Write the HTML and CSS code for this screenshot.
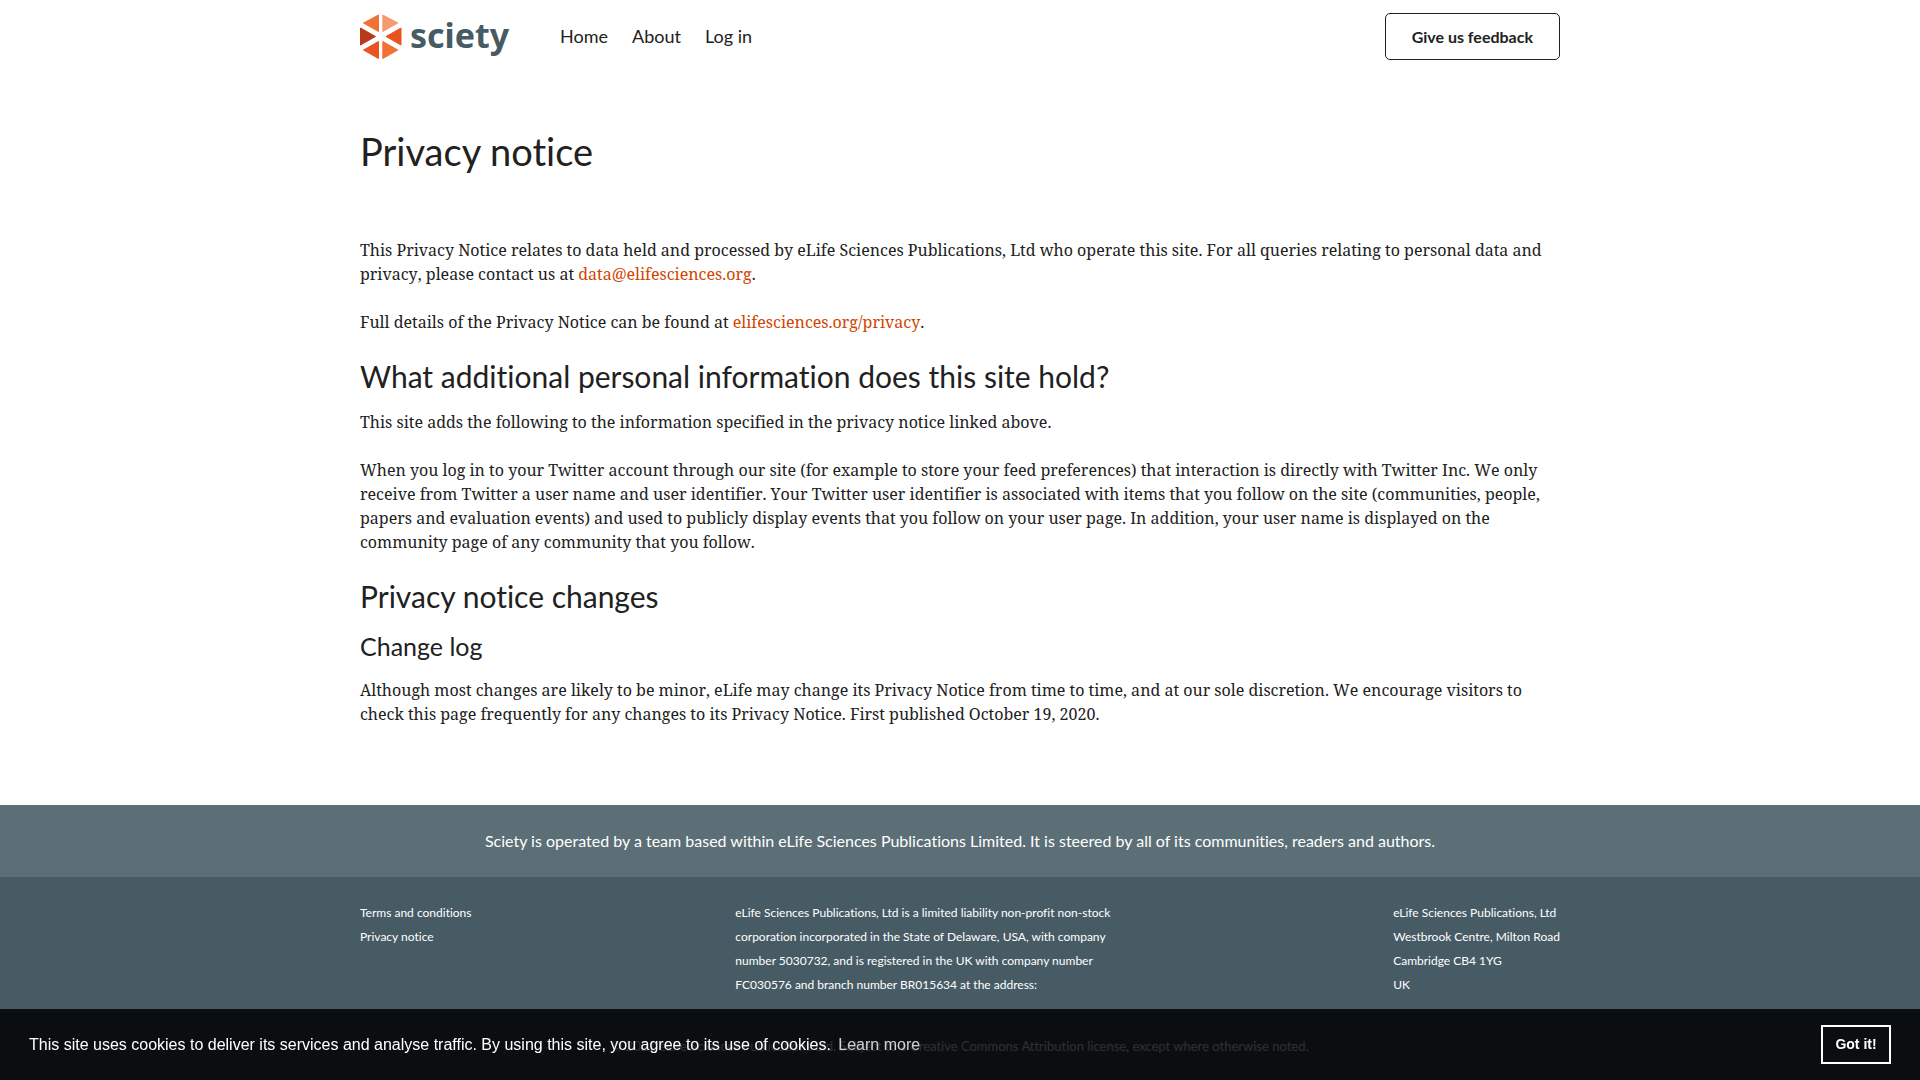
FILE: index.html
```html
<!DOCTYPE html>
<html lang="en">
<head>
<meta charset="utf-8">
<meta name="viewport" content="width=device-width, initial-scale=1">
<title>Privacy notice | Sciety</title>
<link rel="stylesheet" href="styles.css">
</head>
<body>
<header class="site-header">
  <a class="logo" href="#" aria-label="Sciety">
    <svg class="logo-mark" width="42" height="46" viewBox="0 0 42 46" aria-hidden="true">
      <path fill="#ef7135" stroke="#ef7135" stroke-linejoin="round" d="M18.500 1V17.500L3.500 9z"/>
      <path fill="#f59b74" stroke="#f59b74" stroke-linejoin="round" d="M22.800 1V17.500L37.800 9z"/>
      <path fill="#b83a1c" stroke="#b83a1c" stroke-linejoin="round" d="M0.500 14L15.500 22.500L0.500 31z"/>
      <path fill="#e9531f" stroke="#e9531f" stroke-linejoin="round" d="M41 14L26 22.500L41 31z"/>
      <path fill="#e9531f" stroke="#e9531f" stroke-linejoin="round" d="M18.500 27.500V44.500L3.500 36z"/>
      <path fill="#ef7135" stroke="#ef7135" stroke-linejoin="round" d="M22.800 27.500V44.500L37.800 36z"/>
    </svg>
    <span class="logo-name">sciety</span>
  </a>
  <nav class="nav" aria-label="Main">
    <a href="#">Home</a>
    <a href="#">About</a>
    <a href="#">Log in</a>
  </nav>
  <a class="feedback" href="#">Give us feedback</a>
</header>
<main class="content">
  <h1>Privacy notice</h1>
  <p>This Privacy Notice relates to data held and processed by eLife Sciences Publications, Ltd who operate this site. For all queries relating to personal data and privacy, please contact us at <a href="#">data@elifesciences.org</a>.</p>
  <p>Full details of the Privacy Notice can be found at <a href="#">elifesciences.org/privacy</a>.</p>
  <h2>What additional personal information does this site hold?</h2>
  <p>This site adds the following to the information specified in the privacy notice linked above.</p>
  <p>When you log in to your Twitter account through our site (for example to store your feed preferences) that interaction is directly with Twitter Inc. We only receive from Twitter a user name and user identifier. Your Twitter user identifier is associated with items that you follow on the site (communities, people, papers and evaluation events) and used to publicly display events that you follow on your user page. In addition, your user name is displayed on the community page of any community that you follow.</p>
  <h2>Privacy notice changes</h2>
  <h3>Change log</h3>
  <p>Although most changes are likely to be minor, eLife may change its Privacy Notice from time to time, and at our sole discretion. We encourage visitors to check this page frequently for any changes to its Privacy Notice. First published October 19, 2020.</p>
</main>
<footer class="footer">
  <p class="footer-lead">Sciety is operated by a team based within eLife Sciences Publications Limited. It is steered by all of its communities, readers and authors.</p>
  <div class="footer-columns">
    <ul class="footer-links">
      <li><a href="#">Terms and conditions</a></li>
      <li><a href="#">Privacy notice</a></li>
    </ul>
    <p class="footer-company">eLife Sciences Publications, Ltd is a limited liability non-profit non-stock corporation incorporated in the State of Delaware, USA, with company number 5030732, and is registered in the UK with company number FC030576 and branch number BR015634 at the address:</p>
    <address class="footer-address">eLife Sciences Publications, Ltd<br>Westbrook Centre, Milton Road<br>Cambridge CB4 1YG<br>UK</address>
  </div>
  <small class="copyright">© 2021 eLife Sciences Publications Ltd. Subject to a Creative Commons Attribution license, except where otherwise noted.</small>
</footer>
<div class="cookie-bar" role="dialog" aria-label="Cookie consent">
  <span class="cookie-message">This site uses cookies to deliver its services and analyse traffic. By using this site, you agree to its use of cookies. <a href="#">Learn more</a></span>
  <button class="cookie-accept" type="button">Got it!</button>
</div>
</body>
</html>
```

FILE: styles.css
```css
* { box-sizing: border-box; }

body {
  margin: 0;
  background: #fff;
  color: #212121;
  font: 16px/24px "Noto Serif", "Liberation Serif", serif;
  font-variant-ligatures: none;
  font-kerning: none;
}

h1, h2, h3, p, ul { margin: 0; padding: 0; }

.site-header, .nav, .feedback, h1, h2, h3, .footer {
  font-family: Lato, sans-serif;
  font-kerning: normal;
}

.site-header, .content, .footer-columns {
  width: 100%;
  max-width: 1200px;
  margin: 0 auto;
}

.site-header {
  display: flex;
  align-items: center;
  height: 73px;
}

.site-header a { color: #212121; text-decoration: none; }

.logo {
  display: flex;
  align-items: center;
  gap: 8px;
  width: 200px;
}

.site-header .logo-name {
  color: #475b64;
  font: bold 34px/40px "Noto Sans", sans-serif;
  padding-bottom: 4px;
}

.nav { display: flex; gap: 24px; padding-bottom: 2px; font-size: 18px; }

.site-header .feedback {
  margin-left: auto;
  padding: 11px 26px 10px;
  border: 1px solid #212121;
  border-radius: 5px;
  font-size: 16px;
  font-weight: bold;
}

.content { padding-bottom: 55px; }

h1 { padding: 54px 0 63px; font-size: 38px; line-height: 48px; font-weight: 400; }
h2 { margin-bottom: 16px; font-size: 30px; line-height: 36px; font-weight: 400; }
h3 { margin-bottom: 16px; font-size: 25px; line-height: 32px; font-weight: 400; }

.content p { margin-bottom: 24px; }
.content a { color: #cf4500; text-decoration: none; }

.footer { background: #475b64; color: #fff; }

.footer-lead { padding: 24px; background: #5c6f76; text-align: center; }

.footer-columns {
  display: flex;
  justify-content: space-between;
  padding: 24px 0 16px;
  font-size: 12px;
}

.footer-links { list-style: none; }
.footer a { color: inherit; text-decoration: none; }
.footer-company { width: 394px; }
.footer-address { font-style: normal; }

.copyright {
  display: block;
  padding: 21px 24px 22px;
  background: #38505a;
  text-align: center;
  font-size: 13px;
}

.cookie-bar {
  position: fixed;
  inset: auto 0 0;
  display: flex;
  align-items: center;
  justify-content: space-between;
  padding: 16px 29px;
  background: rgba(0, 0, 0, 0.82);
  color: #fff;
  font: 16px/24px "Liberation Sans", Arial, sans-serif;
}

.cookie-message a {
  display: inline-block;
  padding: 0 3px;
  color: #fff;
  opacity: 0.8;
  text-decoration: none;
}

.cookie-accept {
  min-width: 70px;
  padding: 6px 11px;
  border: 2px solid #fff;
  background: transparent;
  color: #fff;
  font: bold 14px/23px "Liberation Sans", Arial, sans-serif;
}
```
